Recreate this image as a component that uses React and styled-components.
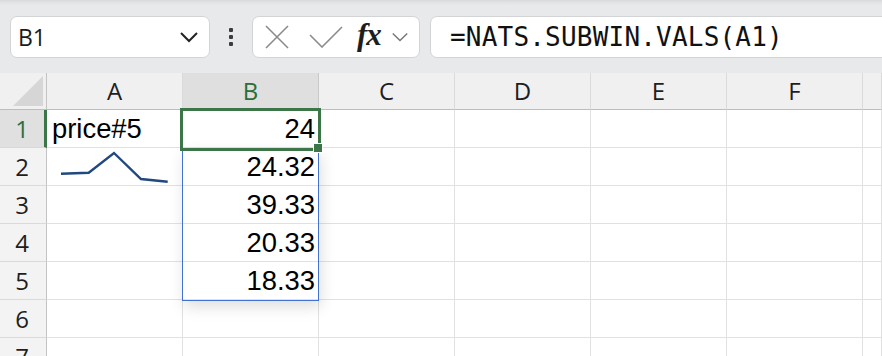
import React from 'react'
import styled, { createGlobalStyle } from 'styled-components'

const GlobalStyle = createGlobalStyle`
  html, body {
    margin: 0;
    padding: 0;
    background: #ffffff;
    overflow: hidden;
  }
  * { box-sizing: border-box; }
`

const Page = styled.div`
  width: 882px;
  height: 356px;
  overflow: hidden;
  background: #fff;
`

const Toolbar = styled.div`
  height: 73px;
  display: flex;
  align-items: flex-start;
  padding: 16px 0 0 10px;
  background: linear-gradient(#d8d9db 0, #e3e4e6 3px, #e8e9eb 5px, #e8e9eb 100%);
`

const Pill = styled.div`
  height: 42px;
  background: #fff;
  border: 1px solid #d3d4d6;
  border-radius: 7px;
  display: flex;
  align-items: center;
`

const NameBox = styled(Pill)`
  width: 200px;
  justify-content: space-between;
  padding: 0 10px 0 7px;
  font-family: "Open Sans", "Noto Sans", sans-serif;
  font-size: 23px;
  color: #1b1b1b;
`

const Dots = styled.div`
  width: 42px;
  height: 42px;
  display: flex;
  flex-direction: column;
  align-items: center;
  justify-content: center;
  gap: 3px;
  span {
    width: 4px;
    height: 4px;
    background: #3c3c3c;
    border-radius: 1px;
  }
`

const FormulaTools = styled(Pill)`
  width: 168px;
  padding: 0 0 0 12px;
`

const Fx = styled.span`
  font-family: "Liberation Serif", "DejaVu Serif", serif;
  font-style: italic;
  font-weight: bold;
  font-size: 31px;
  color: #1e1e1e;
  margin: 0 10px 5px 14px;
  letter-spacing: -1px;
`

const FormulaBar = styled(Pill)`
  flex: 1;
  margin-left: 10px;
  margin-right: -12px;
  padding-left: 19px;
  font-family: "DejaVu Sans Mono", "Liberation Mono", monospace;
  font-size: 26px;
  letter-spacing: 0.2px;
  color: #111;
`

const GridWrap = styled.div`
  position: relative;
  display: grid;
  grid-template-columns: 47px repeat(6, 136px) 1fr;
  grid-auto-rows: 38px;
  grid-template-rows: 37px;
`

const Cell = styled.div`
  border-right: 1px solid #e1e1e1;
  border-bottom: 1px solid #e1e1e1;
  font-family: "Liberation Sans", Arial, sans-serif;
  font-size: 27.4px;
  line-height: 38px;
  color: #000;
  padding: 0 3px 0 5px;
  text-align: ${p => (p.$num ? 'right' : 'left')};
  white-space: nowrap;
  position: relative;
`

const ColHead = styled.div`
  background: ${p => (p.$active ? '#dfdfdf' : '#f0f0f0')};
  color: ${p => (p.$active ? '#2c6e3a' : '#1e1e1e')};
  border-right: 1px solid ${p => (p.$active ? '#c9c9c9' : '#dadada')};
  border-bottom: 1px solid #bdbdbd;
  font-family: "Open Sans", "Noto Sans", sans-serif;
  font-size: 24px;
  line-height: 36px;
  text-align: center;
`

const RowHead = styled.div`
  background: ${p => (p.$active ? '#e0e0e0' : '#f3f3f3')};
  color: ${p => (p.$active ? '#2c6e3a' : '#1e1e1e')};
  border-right: ${p => (p.$active ? '3px solid #3b7548' : '1px solid #c3c3c3')};
  border-bottom: 1px solid #dadada;
  font-family: "Open Sans", "Noto Sans", sans-serif;
  font-size: 24px;
  line-height: 37px;
  text-align: center;
  padding-right: ${p => (p.$active ? '0' : '2px')};
`

const Corner = styled.div`
  background: #f0f0f0;
  border-right: 1px solid #c3c3c3;
  border-bottom: 1px solid #bdbdbd;
  position: relative;
  &::after {
    content: '';
    position: absolute;
    right: 3px;
    bottom: 3px;
    width: 0;
    height: 0;
    border-left: 30px solid transparent;
    border-bottom: 30px solid #d6d6d6;
  }
`

const SpillRange = styled.div`
  position: absolute;
  left: 182px;
  top: 75px;
  width: 137px;
  height: 153px;
  border: 1px solid #4272cf;
  box-shadow: 2px 6px 14px rgba(0, 0, 0, 0.13);
  pointer-events: none;
`

const ActiveCell = styled.div`
  position: absolute;
  left: 180px;
  top: 35px;
  width: 141px;
  height: 43px;
  border: 3px solid #3b7548;
  pointer-events: none;
  &::after {
    content: '';
    position: absolute;
    right: -5px;
    bottom: -5px;
    width: 8px;
    height: 8px;
    background: #3b7548;
    border: 1px solid #fff;
  }
`

const Spark = styled.svg`
  position: absolute;
  left: 0;
  top: 0;
`

const columns = ['A', 'B', 'C', 'D', 'E', 'F', '']
const values = ['24', '24.32', '39.33', '20.33', '18.33', '', '']

function Chevron({ color = '#222', w = 20, sw = 2 }) {
  return (
    <svg width={w} height="12" viewBox="0 0 20 12">
      <path d="M2 2 L10 10 L18 2" fill="none" stroke={color} strokeWidth={sw} />
    </svg>
  )
}

export default function App() {
  return (
    <Page>
      <GlobalStyle />
      <Toolbar>
        <NameBox>
          <span>B1</span>
          <Chevron />
        </NameBox>
        <Dots>
          <span />
          <span />
          <span />
        </Dots>
        <FormulaTools>
          <svg width="24" height="24" viewBox="0 0 24 24">
            <path d="M1 1 L23 23 M23 1 L1 23" stroke="#8c8c8c" strokeWidth="1.6" fill="none" />
          </svg>
          <svg width="34" height="22" viewBox="0 0 34 22" style={{ marginLeft: 20 }}>
            <path d="M1 9 L13 21 L33 1" stroke="#8c8c8c" strokeWidth="1.6" fill="none" />
          </svg>
          <Fx>fx</Fx>
          <Chevron color="#777" w={18} sw={1.6} />
        </FormulaTools>
        <FormulaBar>=NATS.SUBWIN.VALS(A1)</FormulaBar>
      </Toolbar>
      <GridWrap>
        <Corner />
        {columns.map((c, i) => (
          <ColHead key={i} $active={c === 'B'}>{c}</ColHead>
        ))}
        {values.map((v, r) => (
          <React.Fragment key={r}>
            <RowHead $active={r === 0}>{r + 1}</RowHead>
            <Cell>
              {r === 0 && 'price#5'}
              {r === 1 && (
                <Spark width="135" height="37" viewBox="0 0 135 37">
                  <polyline
                    points="14,25.7 41.7,24.7 67,5 94,31 120.7,33.7"
                    fill="none"
                    stroke="#21487f"
                    strokeWidth="2.4"
                  />
                </Spark>
              )}
            </Cell>
            <Cell $num>{v}</Cell>
            <Cell />
            <Cell />
            <Cell />
            <Cell />
            <Cell />
          </React.Fragment>
        ))}
        <SpillRange />
        <ActiveCell />
      </GridWrap>
    </Page>
  )
}
